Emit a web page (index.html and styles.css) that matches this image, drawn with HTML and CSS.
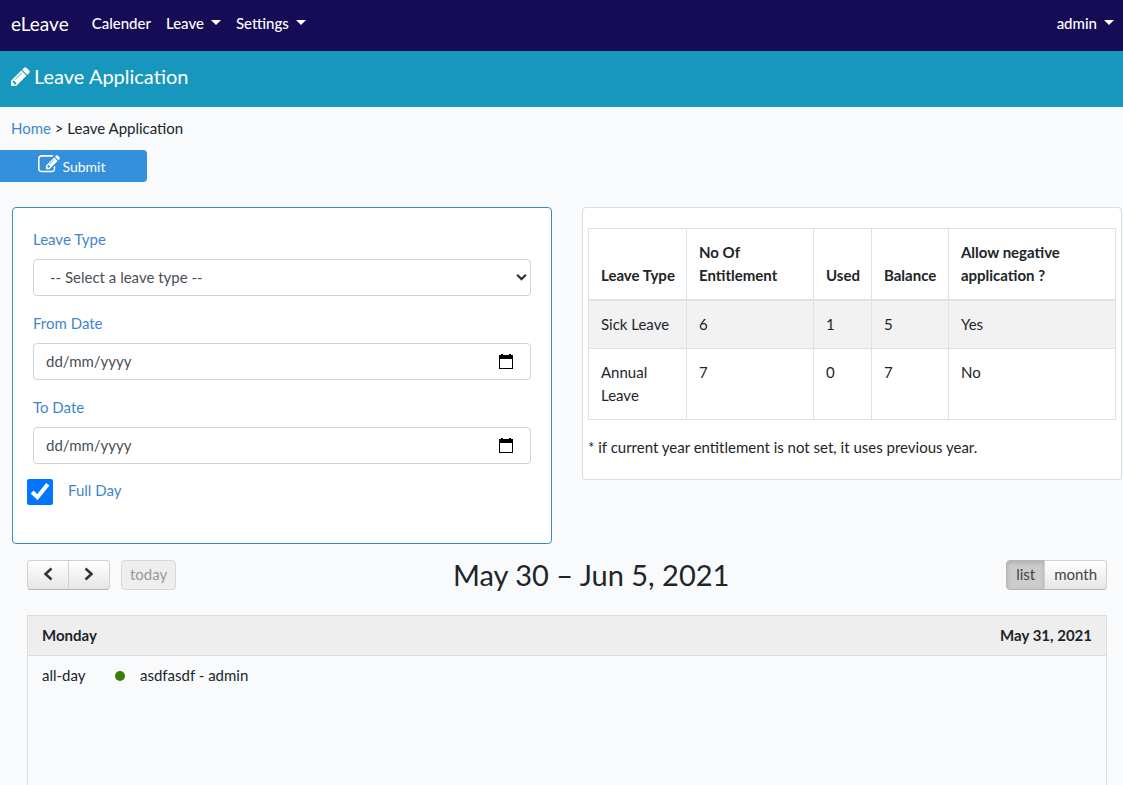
FILE: index.html
```html
<!DOCTYPE html>
<html lang="en-GB">
<head>
<meta charset="utf-8">
<meta name="viewport" content="width=device-width, initial-scale=1">
<title>eLeave - Leave Application</title>
<link rel="stylesheet" href="styles.css">
</head>
<body>
<nav class="navbar">
  <a class="brand" href="#">eLeave</a>
  <a class="nav-link" href="#">Calender</a>
  <button class="nav-link dropdown" type="button">Leave</button>
  <button class="nav-link dropdown" type="button">Settings</button>
  <button class="nav-link dropdown account" type="button">admin</button>
</nav>
<header class="page-header">
  <svg class="pencil" viewBox="128 128 1536 1536" aria-hidden="true"><path fill="currentColor" d="M491 1536l91-91-235-235-91 91v107h128v128h107zm523-928q0-22-22-22-10 0-17 7l-542 542q-7 7-7 17 0 22 22 22 10 0 17-7l542-542q7-7 7-17zm-54-192l416 416-832 832h-416v-416zm683 96q0 53-37 90l-166 166-416-416 166-165q36-38 90-38 53 0 91 38l235 234q37 39 37 91z"/></svg>
  <h1 class="page-title">Leave Application</h1>
</header>
<main>
  <div class="breadcrumb"><a href="#">Home</a> &gt; Leave Application</div>
  <button class="submit" type="submit" form="leave-form">
    <svg class="edit" viewBox="0 128 1792 1536" aria-hidden="true"><path fill="currentColor" d="M888 1184l116-116-152-152-116 116v56h96v96h56zm440-720q-16-16-33 1l-350 350q-17 17-1 33t33-1l350-350q17-17 1-33zm80 594v190q0 119-84.500 203.500t-203.500 84.500h-832q-119 0-203.500-84.500t-84.500-203.500v-832q0-119 84.500-203.500t203.500-84.500h832q63 0 117 25 15 7 18 23 3 17-9 29l-49 49q-14 14-32 8-23-6-45-6h-832q-66 0-113 47t-47 113v832q0 66 47 113t113 47h832q66 0 113-47t47-113v-126q0-13 9-22l64-64q15-15 35-7t20 29zm-96-738l288 288-672 672h-288v-288zm444 132l-92 92-288-288 92-92q28-28 68-28t68 28l152 152q28 28 28 68t-28 68z"/></svg>
    <span>Submit</span>
  </button>
  <div class="columns">
    <form class="card leave-form" id="leave-form">
      <div class="field">
        <label for="leave-type">Leave Type</label>
        <div class="select-wrap">
          <select class="control" id="leave-type"><option>-- Select a leave type --</option></select>
          <svg class="chevron" viewBox="0 0 10 8" aria-hidden="true"><path d="M1 1.500l4 4 4-4" fill="none" stroke="currentColor" stroke-width="2"/></svg>
        </div>
      </div>
      <div class="field">
        <label for="from-date">From Date</label>
        <div class="control date">
          <input id="from-date" type="text" placeholder="dd/mm/yyyy">
          <button type="button" aria-label="Choose from date"><svg viewBox="0 0 14 16"><path fill="currentColor" fill-rule="evenodd" d="M2 0h2v1h6V0h2v1h2v14H0V1h2zM1 5v9h12V5z"/></svg></button>
        </div>
      </div>
      <div class="field">
        <label for="to-date">To Date</label>
        <div class="control date">
          <input id="to-date" type="text" placeholder="dd/mm/yyyy">
          <button type="button" aria-label="Choose to date"><svg viewBox="0 0 14 16"><path fill="currentColor" fill-rule="evenodd" d="M2 0h2v1h6V0h2v1h2v14H0V1h2zM1 5v9h12V5z"/></svg></button>
        </div>
      </div>
      <div class="check-row">
        <input class="check" id="full-day" type="checkbox" checked>
        <label for="full-day">Full Day</label>
      </div>
    </form>
    <section class="card balance">
      <table>
        <colgroup><col class="c-type"><col class="c-entitlement"><col class="c-used"><col class="c-balance"><col></colgroup>
        <thead><tr><th>Leave Type</th><th>No Of Entitlement</th><th>Used</th><th>Balance</th><th>Allow negative<br>application ?</th></tr></thead>
        <tbody>
          <tr><td>Sick Leave</td><td>6</td><td>1</td><td>5</td><td>Yes</td></tr>
          <tr><td>Annual<br>Leave</td><td>7</td><td>0</td><td>7</td><td>No</td></tr>
        </tbody>
      </table>
      <p>* if current year entitlement is not set, it uses previous year.</p>
    </section>
  </div>
  <section class="calendar">
    <div class="toolbar">
      <div class="tools">
        <div class="group">
          <button class="fc-button arrow" type="button" aria-label="Previous"><svg viewBox="0 0 10 14"><path d="M8.500 1.500L2.500 7l6 5.500"/></svg></button>
          <button class="fc-button arrow" type="button" aria-label="Next"><svg viewBox="0 0 10 14"><path d="M1.500 1.500l6 5.500-6 5.500"/></svg></button>
        </div>
        <button class="fc-button" type="button" disabled>today</button>
      </div>
      <h2>May 30 – Jun 5, 2021</h2>
      <div class="group">
        <button class="fc-button view active" type="button">list</button>
        <button class="fc-button view" type="button">month</button>
      </div>
    </div>
    <div class="agenda">
      <div class="day"><span>Monday</span><span>May 31, 2021</span></div>
      <div class="event"><span class="time">all-day</span><span class="dot"></span><span>asdfasdf - admin</span></div>
    </div>
  </section>
</main>
</body>
</html>
```

FILE: styles.css
```css
* { box-sizing: border-box; }
html, body { height: 100%; }
body {
  margin: 0;
  display: flex;
  flex-direction: column;
  overflow: hidden;
  background: #f8fafc;
  color: #212529;
  font: 15px/23px Lato, "Open Sans", sans-serif;
}
a { color: #3d87d0; text-decoration: none; }
button, input, select { font: inherit; }
button { cursor: pointer; }

.navbar {
  display: flex;
  align-items: center;
  gap: 15px;
  flex: none;
  height: 51px;
  padding: 0 9px 5px 11px;
  background: #160c56;
}
.brand { margin-right: 8px; color: #fff; font-size: 19px; }
.nav-link {
  padding: 0;
  border: 0;
  background: none;
  color: #fff;
  font-weight: 500;
}
.dropdown { display: flex; align-items: center; gap: 7px; }
.dropdown::after {
  content: "";
  margin-bottom: 2px;
  border: solid transparent;
  border-width: 5px 5px 0;
  border-top-color: currentColor;
}
.account { margin-left: auto; }

.page-header {
  display: flex;
  align-items: center;
  gap: 4px;
  flex: none;
  height: 56px;
  padding: 0 11px 6px;
  background: #1797bd;
  color: #fff;
}
.pencil { width: 19px; height: 19px; }
.page-title { margin: 0; font-size: 20px; font-weight: 400; }

main { display: flex; flex-direction: column; flex: 1; min-height: 0; }
.breadcrumb { padding: 10px 11px; }
.submit {
  display: flex;
  align-items: center;
  justify-content: center;
  gap: 3px;
  width: 147px;
  height: 32px;
  flex: none;
  padding: 0 4px 0 0;
  border: 0;
  border-radius: 0 4px 4px 0;
  background: #3490dc;
  color: #fff;
  font-size: 14px;
}
.edit { width: 22px; height: 19px; margin-bottom: 3px; }

.columns {
  display: grid;
  grid-template-columns: 1fr 1fr;
  align-items: start;
  gap: 30px;
  margin-top: 25px;
  padding: 0 1px 0 12px;
}
.card { border: 1px solid #dadcdf; border-radius: 4px; background: #fff; }
.leave-form { padding: 20px 20px 38px; border-color: #3a8ac6; }
label { color: #4285cf; }
.field { margin-bottom: 16px; }
.field label { display: block; margin-bottom: 8px; }
.control {
  display: block;
  width: 100%;
  height: 37px;
  border: 1px solid #ced4da;
  border-radius: 4px;
  background: #fff;
  color: #495057;
}
.select-wrap { position: relative; }
select.control { padding: 0 16px; appearance: none; }
.chevron {
  position: absolute;
  top: 14px;
  right: 4px;
  width: 11px;
  height: 9px;
  color: #333;
  pointer-events: none;
}
.date { display: flex; align-items: center; padding: 0 17px 0 12px; }
.date input {
  flex: 1;
  min-width: 0;
  padding: 0;
  border: 0;
  outline: 0;
  background: none;
  color: inherit;
}
.date input::placeholder { color: #495057; opacity: 1; }
.date button { display: flex; padding: 0; border: 0; background: none; color: #000; }
.date svg { width: 14px; height: 16px; }
.check-row { display: flex; gap: 15px; margin: -1px 0 0 -6px; }
.check { width: 26px; height: 26px; margin: 0; accent-color: #0075ff; }

.balance { padding: 20px 5px; }
table { width: 100%; border-collapse: collapse; table-layout: fixed; }
.c-type { width: 18.6%; }
.c-entitlement { width: 24.1%; }
.c-used { width: 11%; }
.c-balance { width: 14.6%; }
th, td {
  padding: 12px;
  border: 1px solid #dee2e6;
  text-align: left;
  vertical-align: top;
}
th { padding-right: 8px; border-bottom-width: 2px; vertical-align: bottom; }
tbody tr:first-child { background: #f2f2f2; }
.balance p { margin: 16px 0 0; }

.calendar {
  display: flex;
  flex-direction: column;
  flex: 1;
  padding: 16px 16px 0 27px;
}
.toolbar { display: flex; align-items: center; justify-content: space-between; }
.toolbar h2 { margin: 0; font-size: 29px; font-weight: 400; line-height: 30px; }
.tools { display: flex; gap: 11px; }
.group { display: flex; }
.fc-button {
  height: 30px;
  padding: 0 8px 2px;
  border: 1px solid #cfd0d1;
  border-bottom-color: #b5b5b6;
  border-radius: 4px;
  background: linear-gradient(#fff, #e6e6e6);
  color: #444;
}
.group .fc-button:first-child { border-radius: 4px 0 0 4px; }
.group .fc-button:last-child { margin-left: -1px; border-radius: 0 4px 4px 0; }
.arrow { display: flex; align-items: center; justify-content: center; width: 42px; }
.view { padding: 0 9px 2px; }
.arrow svg {
  width: 10px;
  height: 14px;
  fill: none;
  stroke: #333;
  stroke-width: 2.500;
}
.fc-button:disabled { background: #eee; border-color: #d5d6d7; color: #999; }
.active {
  background: #ccc;
  border-color: #b5b5b5;
  box-shadow: inset 0 2px 4px rgba(0, 0, 0, .15);
}
.agenda { flex: 1; margin-top: 25px; border: 1px solid #dadcde; border-bottom: 0; }
.day {
  display: flex;
  justify-content: space-between;
  padding: 8px 14px;
  border-bottom: 1px solid #dadcde;
  background: #eee;
  font-weight: 700;
}
.event { display: flex; align-items: center; padding: 8px 14px; }
.time { width: 73px; }
.dot { width: 10px; height: 10px; margin-right: 15px; border-radius: 50%; background: #378006; }
```
